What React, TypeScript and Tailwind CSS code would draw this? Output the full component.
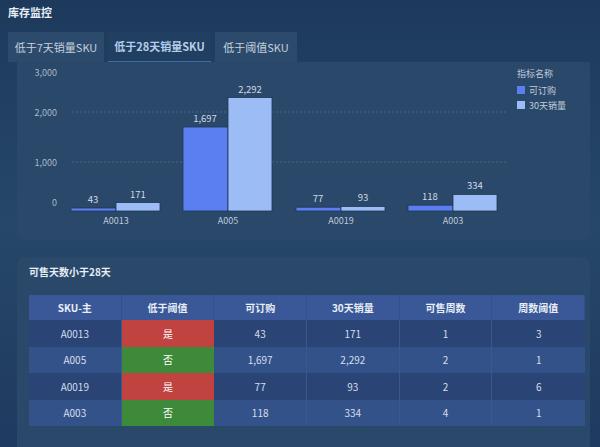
import React from "react";

const data = [
  { k: "A0013", a: 43, b: 171, low: true, w: 1, t: 3 },
  { k: "A005", a: 1697, b: 2292, low: false, w: 2, t: 1 },
  { k: "A0019", a: 77, b: 93, low: true, w: 2, t: 6 },
  { k: "A003", a: 118, b: 334, low: false, w: 4, t: 1 },
];
const fmt = (n: number) => n.toLocaleString("en-US");

function Chart() {
  const base = 149;
  const sc = 0.0495;
  const xs = [54, 166, 279, 391];
  return (
    <svg width="573" height="178" className="block">
      {[{ v: "3,000", y: 14 }, { v: "2,000", y: 54 }, { v: "1,000", y: 104 }, { v: "0", y: 144 }].map((l) => (
        <text key={l.v} x="40" y={l.y} textAnchor="end" fontSize="9" fill="#a9b8cc">{l.v}</text>
      ))}
      <line x1="55" x2="490" y1="50" y2="50" stroke="#5a7090" strokeDasharray="2 2" strokeWidth="0.7" />
      <line x1="55" x2="490" y1="100" y2="100" stroke="#5a7090" strokeDasharray="2 2" strokeWidth="0.7" />
      {data.map((d, i) => {
        const ha = Math.max(d.a * sc, 3);
        const hb = Math.max(d.b * sc, 3);
        const x = xs[i];
        return (
          <g key={d.k}>
            <rect x={x} y={base - ha} width="45" height={ha} fill="#5b7ff0" stroke="#1e3556" strokeWidth="0.8" />
            <rect x={x + 45} y={base - hb} width="44" height={hb} fill="#9bbcf5" stroke="#1e3556" strokeWidth="0.8" />
            <text x={x + 22} y={base - ha - 5} textAnchor="middle" fontSize="9.5" fill="#d0dae8">{fmt(d.a)}</text>
            <text x={x + 67} y={base - hb - 5} textAnchor="middle" fontSize="9.5" fill="#d0dae8">{fmt(d.b)}</text>
            <text x={x + 45} y={base + 13} textAnchor="middle" fontSize="9" fill="#c0cbdb">{d.k}</text>
          </g>
        );
      })}
      <text x="500" y="15" fontSize="9" fill="#c0cbdb">指标名称</text>
      <rect x="500" y="24" width="8" height="8" fill="#5b7ff0" />
      <text x="512" y="32" fontSize="9" fill="#c0cbdb">可订购</text>
      <rect x="500" y="39" width="8" height="8" fill="#9bbcf5" />
      <text x="512" y="47" fontSize="9" fill="#c0cbdb">30天销量</text>
    </svg>
  );
}

export default function App() {
  const cols = ["SKU-主", "低于阈值", "可订购", "30天销量", "可售周数", "周数阈值"];
  return (
    <div
      className="w-[600px] h-[447px] overflow-hidden bg-gradient-to-b from-[#1d3a5c] via-[#264768] to-[#1f3a60] text-white"
      style={{ fontFamily: '"Noto Sans CJK SC", "Noto Sans", sans-serif' }}
    >
      <div className="px-[8px] pt-[4px] h-[32px] text-[11px] font-bold text-[#e8eef6] leading-[16px]">库存监控</div>
      <div className="flex gap-[4px] px-[8px] h-[30px]">
        <div className="w-[96px] flex items-center justify-center bg-[#2c4b6c] text-[11px] text-[#c4d0de]">低于7天销量SKU</div>
        <div className="w-[103px] flex items-center justify-center bg-[#213f60] text-[11px] font-bold text-[#b5cdec] border-b border-[#3b6ea0]">低于28天销量SKU</div>
        <div className="w-[82px] flex items-center justify-center bg-[#2c4b6c] text-[11px] text-[#c4d0de]">低于阈值SKU</div>
      </div>
      <div className="mx-[17px] w-[573px] h-[178px] bg-[#2a4869] rounded-b-[8px]">
        <Chart />
      </div>
      <div className="mx-[17px] mt-[17px] w-[573px] h-[200px] bg-[#2a4869] rounded-[8px] pt-[8px] px-[12px]">
        <div className="text-[10px] font-bold text-[#e8eef6] leading-[14px]">可售天数小于28天</div>
        <div className="mt-[16px] w-[556px] text-[10px]">
          <div className="grid grid-cols-6 h-[25px] bg-[#3a5898] font-bold text-[#e8eef6]">
            {cols.map((c) => (
              <div key={c} className="flex items-center justify-center border-r border-[#33508a]">{c}</div>
            ))}
          </div>
          {data.map((d, i) => (
            <div key={d.k} className={`grid grid-cols-6 h-[26.5px] text-[#d6dfec] ${i % 2 ? "bg-[#34528a]" : "bg-[#2a4476]"}`}>
              <div className="flex items-center justify-center border-r border-[#3a5790]">{d.k}</div>
              <div className={`flex items-center justify-center text-white ${d.low ? "bg-[#c0433f]" : "bg-[#3c8a3a]"}`}>{d.low ? "是" : "否"}</div>
              <div className="flex items-center justify-center border-r border-[#3a5790]">{fmt(d.a)}</div>
              <div className="flex items-center justify-center border-r border-[#3a5790]">{fmt(d.b)}</div>
              <div className="flex items-center justify-center border-r border-[#3a5790]">{d.w}</div>
              <div className="flex items-center justify-center">{d.t}</div>
            </div>
          ))}
        </div>
      </div>
    </div>
  );
}
